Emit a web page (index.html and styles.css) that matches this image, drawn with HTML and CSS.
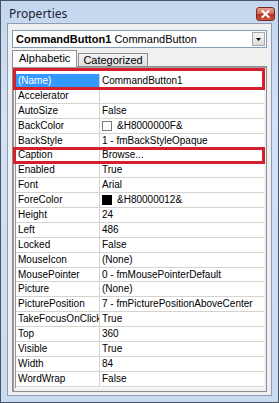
FILE: index.html
```html
<!DOCTYPE html>
<html>
<head>
<meta charset="utf-8">
<link rel="stylesheet" href="styles.css">
</head>
<body>
<div class="window">
  <div class="titlebar">
    <span class="title">Properties</span>
    <span class="close"><svg width="9" height="8" viewBox="0 0 9 8"><path d="M1.5 1 L7.5 7 M7.5 1 L1.5 7" stroke="#fff" stroke-width="2" stroke-linecap="square"/></svg></span>
  </div>
  <div class="panel">
    <div class="combo">
      <span class="combo-text"><b>CommandButton1</b> CommandButton</span>
      <span class="combo-btn"><svg width="5" height="3" viewBox="0 0 5 3"><path d="M0 0 H5 L2.5 3 Z" fill="#000"/></svg></span>
    </div>
    <div class="tabs">
      <span class="tab active">Alphabetic</span>
      <span class="tab">Categorized</span>
    </div>
    <div class="grid">
      <div class="rows">
        <div class="row selected"><span class="name">(Name)</span><span class="val">CommandButton1</span><span class="mark mark-first"></span></div>
        <div class="row"><span class="name">Accelerator</span><span class="val"></span></div>
        <div class="row"><span class="name">AutoSize</span><span class="val">False</span></div>
        <div class="row"><span class="name">BackColor</span><span class="val"><i class="sw sw-white"></i>&amp;H8000000F&amp;</span></div>
        <div class="row"><span class="name">BackStyle</span><span class="val">1 - fmBackStyleOpaque</span></div>
        <div class="row"><span class="name">Caption</span><span class="val">Browse...</span><span class="mark"></span></div>
        <div class="row"><span class="name">Enabled</span><span class="val">True</span></div>
        <div class="row"><span class="name">Font</span><span class="val">Arial</span></div>
        <div class="row"><span class="name">ForeColor</span><span class="val"><i class="sw sw-black"></i>&amp;H80000012&amp;</span></div>
        <div class="row"><span class="name">Height</span><span class="val">24</span></div>
        <div class="row"><span class="name">Left</span><span class="val">486</span></div>
        <div class="row"><span class="name">Locked</span><span class="val">False</span></div>
        <div class="row"><span class="name">MouseIcon</span><span class="val">(None)</span></div>
        <div class="row"><span class="name">MousePointer</span><span class="val">0 - fmMousePointerDefault</span></div>
        <div class="row"><span class="name">Picture</span><span class="val">(None)</span></div>
        <div class="row"><span class="name">PicturePosition</span><span class="val">7 - fmPicturePositionAboveCenter</span></div>
        <div class="row"><span class="name">TakeFocusOnClick</span><span class="val">True</span></div>
        <div class="row"><span class="name">Top</span><span class="val">360</span></div>
        <div class="row"><span class="name">Visible</span><span class="val">True</span></div>
        <div class="row"><span class="name">Width</span><span class="val">84</span></div>
        <div class="row"><span class="name">WordWrap</span><span class="val">False</span></div>
      </div>
    </div>
  </div>
</div>
</body>
</html>
```
FILE: styles.css
```css
html, body { margin: 0; padding: 0; background: #fff; }
body { font-family: "Liberation Sans", Arial, sans-serif; }

.window {
  box-sizing: border-box;
  width: 279px;
  height: 403px;
  border: 1px solid #4a5463;
  background: linear-gradient(180deg, #c4d7ee 0%, #d3e2f4 30%, #c9dbf0 100%);
  padding: 0 6px 6px 6px;
  display: flex;
  flex-direction: column;
}

.titlebar {
  height: 22px;
  display: flex;
  align-items: center;
  justify-content: space-between;
  position: relative;
}
.title {
  font-family: "Noto Sans", "Liberation Sans", sans-serif;
  font-size: 12px;
  color: #1c2430;
  margin-left: 2px;
  margin-top: 2px;
}
.close {
  width: 17px;
  height: 12px;
  border: 1px solid #7a2a22;
  border-radius: 3px;
  background: linear-gradient(180deg, #e6a393 0%, #d06a55 45%, #b6321f 55%, #c9543d 100%);
  display: flex;
  align-items: center;
  justify-content: center;
  margin-right: -3px;
  margin-top: 3px;
}

.panel {
  flex: 1;
  border: 1px solid #8e9cb2;
  background: #f0f0f0;
  padding: 6px 4px 3px 4px;
  display: flex;
  flex-direction: column;
}

.combo {
  height: 18px;
  box-sizing: border-box;
  border: 1px solid #7f9db9;
  background: #fff;
  display: flex;
  align-items: center;
  justify-content: space-between;
  padding-left: 3px;
}
.combo-text {
  font-size: 11px;
  color: #000;
}
.combo-text b { font-weight: bold; }
.combo-btn {
  width: 13px;
  height: 14px;
  box-sizing: border-box;
  margin-right: 1px;
  border: 1px solid #a7a7a7;
  background: linear-gradient(180deg, #f4f4f4, #dcdcdc);
  display: flex;
  align-items: center;
  justify-content: center;
}

.tabs {
  margin-top: 2px;
  margin-bottom: -1px;
  height: 17px;
  display: flex;
  align-items: flex-end;
  padding-left: 0;
  position: relative;
  z-index: 1;
}
.tab {
  font-size: 11px;
  color: #000;
  box-sizing: border-box;
  height: 13px;
  line-height: 12px;
  padding: 0 4px 0 4px;
  border: 1px solid #8d8f96;
  border-bottom: none;
  background: linear-gradient(180deg, #f2f2f2, #e0e0e0);
  margin-left: -1px;
  margin-bottom: 1px;
}
.tab.active {
  height: 17px;
  line-height: 14px;
  padding: 0 6px 1px 6px;
  background: #fcfcfc;
  margin-left: 0;
  margin-bottom: 0;
  margin-right: 2px;
}

.grid {
  flex: 1;
  border: 1px solid #8a8d93;
  box-shadow: inset 1px 1px 0 #a0a0a0;
  background: #f0f0f0;
  padding: 2px 2px 3px 2px;
  display: flex;
  flex-direction: column;
}
.rows {
  flex: 1;
  background: #fff;
  padding-top: 5px;
  border-left: 1px solid #9a9a9a;
}

.row {
  position: relative;
  height: 14.9px;
  display: flex;
  font-size: 10px;
  color: #000;
  line-height: 14px;
}
.row .name {
  width: 84px;
  flex: none;
  padding-left: 2px;
  border-right: 1px solid #d6d3ce;
  border-bottom: 1px solid #d6d3ce;
  box-sizing: border-box;
  white-space: nowrap;
  overflow: hidden;
}
.row .val {
  flex: 1;
  padding-left: 2px;
  border-bottom: 1px solid #d6d3ce;
  box-sizing: border-box;
  white-space: nowrap;
  overflow: hidden;
  display: flex;
  align-items: center;
}
.row.selected .name {
  background: #3399ff;
  color: #fff;
}

.sw {
  display: inline-block;
  width: 10px;
  height: 10px;
  box-sizing: border-box;
  border: 1px solid #7a7a7a;
  margin-right: 5px;
}
.sw-white { background: #fff; }
.sw-black { background: #000; border-color: #000; }

.mark {
  position: absolute;
  left: -3px;
  right: -1px;
  top: -1px;
  bottom: -1px;
  border: 3px solid #d41f2c;
  pointer-events: none;
  z-index: 2;
}
.mark.mark-first {
  top: -6px;
}
```
